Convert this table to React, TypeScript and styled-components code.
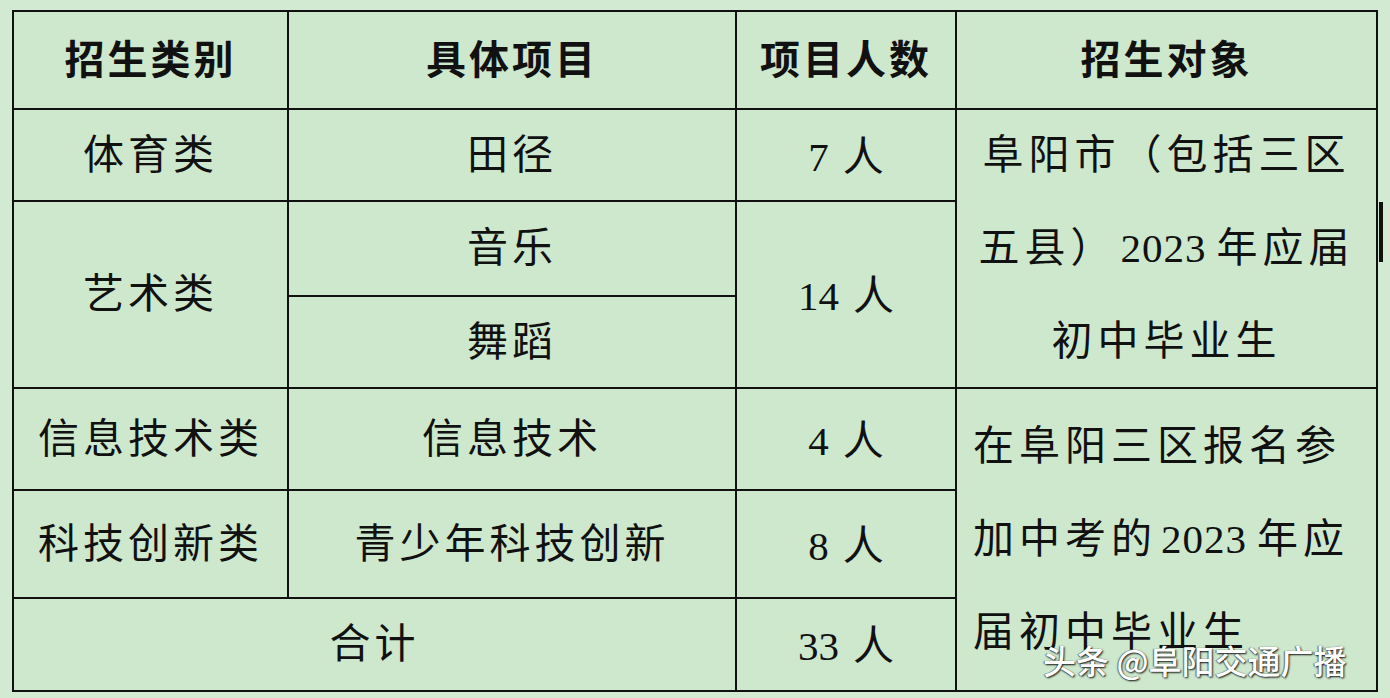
import React from 'react';
import styled, { createGlobalStyle } from 'styled-components';

const GlobalStyle = createGlobalStyle`
  html, body {
    margin: 0;
    padding: 0;
    background: #d2ead1;
  }
  body {
    font-family: 'Liberation Serif', 'Noto Sans CJK SC', serif;
    color: #111;
  }
`;

const Page = styled.div`
  position: relative;
  width: 1390px;
  height: 698px;
  padding: 10px 0 0 12px;
  box-sizing: border-box;
  overflow: hidden;
`;

const Table = styled.div`
  display: grid;
  grid-template-columns: 273px 446px 218px 419px;
  grid-template-rows: 96px 90px 93px 90px 100px 106px 91px;
  gap: 2px;
  width: 1366px;
  box-sizing: border-box;
  padding: 2px;
  background: #111;
`;

const Cell = styled.div<{ $col?: string; $row?: string }>`
  grid-column: ${(p) => p.$col || 'auto'};
  grid-row: ${(p) => p.$row || 'auto'};
  background: #cee8cd;
  display: flex;
  align-items: center;
  justify-content: center;
  font-size: 41px;
  letter-spacing: 4px;
  line-height: 1;
  white-space: nowrap;
`;

const HeadCell = styled(Cell)`
  font-family: 'Noto Sans CJK SC', sans-serif;
  font-weight: 700;
  font-size: 40px;
  letter-spacing: 3px;
  padding-bottom: 6px;
`;

const Count = styled.span`
  letter-spacing: 0;
  & > b {
    font-weight: 400;
    margin-left: 14px;
    font-family: 'Noto Sans CJK SC', serif;
  }
`;

const Target = styled.div<{ $align: 'left' | 'center' }>`
  width: 100%;
  padding-left: ${(p) => (p.$align === 'left' ? '16px' : '0')};
  box-sizing: border-box;
  text-align: ${(p) => p.$align};
  line-height: 93px;
  font-size: 41px;
  letter-spacing: 5px;
  white-space: nowrap;
`;

const Num = styled.span`
  letter-spacing: 1px;
  margin: 0 10px 0 4px;
`;

const EdgeMark = styled.div`
  position: absolute;
  left: 1379px;
  top: 202px;
  width: 4px;
  height: 60px;
  background: #111;
`;

const Watermark = styled.div`
  position: absolute;
  left: 1043px;
  top: 636px;
  font-family: 'Noto Sans CJK SC', sans-serif;
  font-size: 33px;
  font-weight: 500;
  color: #fff;
  letter-spacing: 0;
  text-shadow: 1px 1px 2px rgba(0, 0, 0, 0.9), -1px 0 1px rgba(0, 0, 0, 0.5);
  white-space: nowrap;
`;

const PeopleCount: React.FC<{ n: number }> = ({ n }) => (
  <Count>
    {n}
    <b>人</b>
  </Count>
);

const App: React.FC = () => (
  <Page>
    <GlobalStyle />
    <Table>
      <HeadCell>招生类别</HeadCell>
      <HeadCell>具体项目</HeadCell>
      <HeadCell>项目人数</HeadCell>
      <HeadCell>招生对象</HeadCell>

      <Cell $col="1" $row="2">体育类</Cell>
      <Cell $col="2" $row="2">田径</Cell>
      <Cell $col="3" $row="2">
        <PeopleCount n={7} />
      </Cell>
      <Cell $col="4" $row="2 / span 3">
        <Target $align="center">
          阜阳市（包括三区
          <br />
          五县）<Num>2023</Num>年应届
          <br />
          初中毕业生
        </Target>
      </Cell>

      <Cell $col="1" $row="3 / span 2">艺术类</Cell>
      <Cell $col="2" $row="3">音乐</Cell>
      <Cell $col="3" $row="3 / span 2">
        <PeopleCount n={14} />
      </Cell>
      <Cell $col="2" $row="4">舞蹈</Cell>

      <Cell $col="1" $row="5">信息技术类</Cell>
      <Cell $col="2" $row="5">信息技术</Cell>
      <Cell $col="3" $row="5">
        <PeopleCount n={4} />
      </Cell>
      <Cell $col="4" $row="5 / span 3">
        <Target $align="left">
          在阜阳三区报名参
          <br />
          加中考的<Num>2023</Num>年应
          <br />
          届初中毕业生
        </Target>
      </Cell>

      <Cell $col="1" $row="6">科技创新类</Cell>
      <Cell $col="2" $row="6">青少年科技创新</Cell>
      <Cell $col="3" $row="6">
        <PeopleCount n={8} />
      </Cell>

      <Cell $col="1 / span 2" $row="7">合计</Cell>
      <Cell $col="3" $row="7">
        <PeopleCount n={33} />
      </Cell>
    </Table>
    <EdgeMark />
    <Watermark>头条 @阜阳交通广播</Watermark>
  </Page>
);

export default App;
